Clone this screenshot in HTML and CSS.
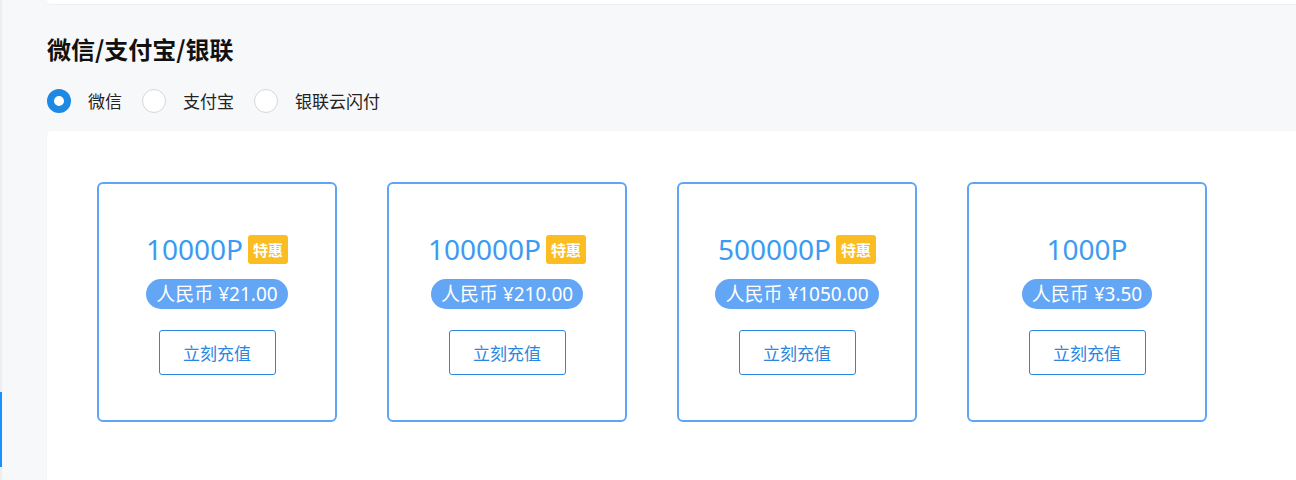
FILE: index.html
```html
<!DOCTYPE html>
<html lang="zh-CN">
<head>
<meta charset="utf-8">
<title>充值</title>
<link rel="stylesheet" href="styles.css">
</head>
<body>
<div class="layout">
  <aside class="side"><span class="side-mark"></span></aside>
  <main class="main">
    <div class="top-card"></div>
    <h2 class="title">微信/支付宝/银联</h2>
    <div class="radios">
      <label class="radio checked"><span class="dot"></span><span class="radio-label">微信</span></label>
      <label class="radio"><span class="dot"></span><span class="radio-label">支付宝</span></label>
      <label class="radio"><span class="dot"></span><span class="radio-label">银联云闪付</span></label>
    </div>
    <section class="panel">
      <div class="item">
        <div class="amount"><span>10000P</span><span class="tag">特惠</span></div>
        <div class="price">人民币 ¥21.00</div>
        <button class="buy">立刻充值</button>
      </div>
      <div class="item">
        <div class="amount"><span>100000P</span><span class="tag">特惠</span></div>
        <div class="price">人民币 ¥210.00</div>
        <button class="buy">立刻充值</button>
      </div>
      <div class="item">
        <div class="amount"><span>500000P</span><span class="tag">特惠</span></div>
        <div class="price">人民币 ¥1050.00</div>
        <button class="buy">立刻充值</button>
      </div>
      <div class="item">
        <div class="amount"><span>1000P</span></div>
        <div class="price">人民币 ¥3.50</div>
        <button class="buy">立刻充值</button>
      </div>
    </section>
  </main>
</div>
</body>
</html>
```
FILE: styles.css
```css
* { box-sizing: border-box; }
html, body { margin: 0; padding: 0; }
body {
  background: #f7f8fa;
  font-family: "Noto Sans CJK SC", "Noto Sans", sans-serif;
  color: #1a1a1a;
  overflow: hidden;
  height: 480px;
}
.layout { display: flex; height: 480px; }
.side {
  width: 47px;
  flex: none;
  border-left: 2px solid #eceef1;
  position: relative;
}
.side-mark {
  position: absolute;
  left: -2px;
  top: 392px;
  width: 2px;
  height: 75px;
  background: #1890ff;
}
.main { flex: 1; min-width: 0; display: flex; flex-direction: column; }
.top-card {
  height: 5px;
  background: #fff;
  border-bottom: 1px solid #eef0f3;
  border-radius: 0 0 0 4px;
}
.title {
  margin: 27px 0 0;
  font-size: 24px;
  line-height: 34px;
  font-weight: 700;
  color: #111;
}
.radios { display: flex; align-items: center; margin-top: 21px; height: 28px; }
.radio { display: flex; align-items: center; margin-right: 20px; cursor: pointer; }
.dot {
  width: 24px; height: 24px;
  border-radius: 50%;
  border: 1px solid #d4d7dc;
  background: #fff;
  margin-right: 17px;
  flex: none;
}
.radio.checked .dot {
  border: 7.5px solid #1e88e5;
  background: #fff;
}
.radio-label { font-size: 17px; color: #222; line-height: 24px; }
.panel {
  margin-top: 16px;
  flex: 1;
  background: #fff;
  border-radius: 4px 0 0 0;
  box-shadow: 0 0 2px rgba(0,0,0,0.06);
  padding: 51px 0 0 50px;
  display: flex;
  align-items: flex-start;
  gap: 50px;
}
.item {
  width: 240px; height: 240px;
  flex: none;
  border: 2px solid #5ea5f6;
  border-radius: 6px;
  display: flex;
  flex-direction: column;
  align-items: center;
  padding-top: 50px;
}
.amount {
  display: flex; align-items: center; gap: 5px;
  height: 30px;
  font-family: "Noto Sans", "Noto Sans CJK SC", sans-serif;
  font-size: 28px;
  color: #3b9bf1;
}
.tag {
  display: inline-flex; align-items: center; justify-content: center;
  width: 40px; height: 29px;
  background: #fbbd22;
  border-radius: 3px;
  color: #fff;
  font-family: "Noto Sans CJK SC", sans-serif;
  font-size: 15px;
  font-weight: 700;
}
.price {
  margin-top: 15px;
  height: 30px;
  padding: 0 10px;
  border-radius: 15px;
  background: #62a6f5;
  color: #fff;
  font-size: 19px;
  line-height: 30px;
  font-family: "Noto Sans", "Noto Sans CJK SC", sans-serif;
}
.buy {
  margin-top: 21px;
  width: 117px; height: 45px;
  border: 1px solid #2b86e0;
  border-radius: 3px;
  background: #fff;
  color: #2b86e0;
  font-family: "Noto Sans CJK SC", sans-serif;
  font-size: 17px;
  cursor: pointer;
}
```
